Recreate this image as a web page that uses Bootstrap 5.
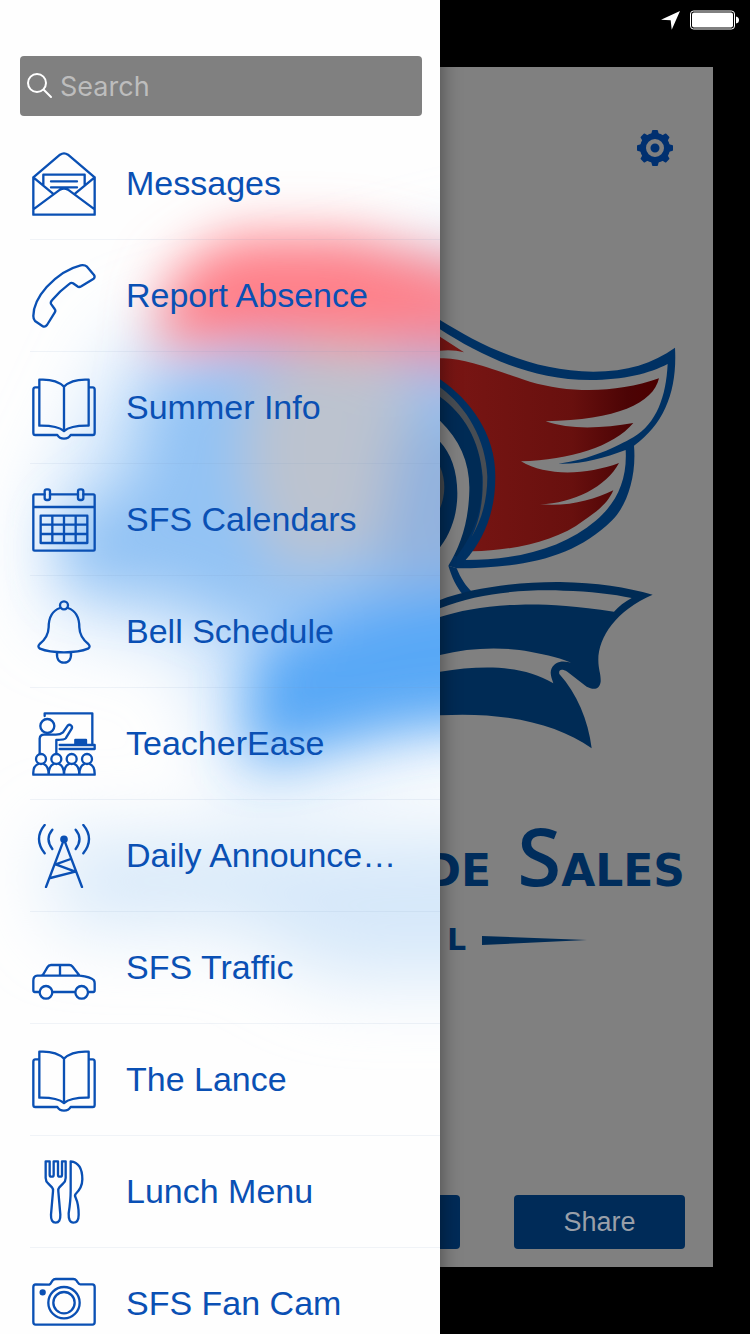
<!DOCTYPE html>
<html lang="en">
<head>
<meta charset="utf-8">
<meta name="viewport" content="width=device-width, initial-scale=1">
<title>School App</title>
<link href="https://cdn.jsdelivr.net/npm/bootstrap@5.3.0/dist/css/bootstrap.min.css" rel="stylesheet">
<style>
  :root { --ink: #0a50b4; --navy: #002b58; --dim: #808080; }
  body { background: #000; font-family: "Liberation Sans", Arial, sans-serif; }
  .drawer { flex: 0 0 auto; width: min(440px, 85vw); background: #fefefe; z-index: 2; box-shadow: 0 0 20px rgba(0, 0, 0, .45); }
  .drawer-glow { z-index: -1; }
  .search-bar { margin: 56px 18px 12px 20px; height: 60px; background: var(--dim); border-radius: 4px; padding: 0 7px; gap: 7px; }
  .search-bar input { background: transparent; color: #fff; font: 27px Inter, sans-serif; outline: 0; min-width: 0; }
  .search-bar input::placeholder { color: #bdbdbd; opacity: 1; }
  .menu-list { margin-left: 30px; min-height: 0; scrollbar-width: none; }
  .menu-row { height: 112px; flex: none; padding-left: 2px; gap: 30px; color: var(--ink); font-size: 34px; border-bottom: 1px solid rgba(120, 150, 190, .1); text-decoration: none; white-space: nowrap; }
  .menu-row svg { width: 64px; height: 64px; flex: none; fill: none; stroke: currentColor; stroke-width: 7; stroke-linejoin: round; stroke-linecap: round; }
  .menu-row .solid { fill: currentColor; }
  .stage { min-width: 0; }
  .status-bar { flex: none; height: 40px; padding-right: 11px; gap: 10px; }
  .home { background: var(--dim); margin: 27px 37px 67px 0; }
  .gear { margin: 63px 40px 134px 0; width: 36px; height: 36px; color: #003070; }
  .wordmark { color: #002d5c; font-family: "DejaVu Sans", sans-serif; font-weight: 700; white-space: nowrap; }
  .name-line { font-size: 44px; line-height: 80px; height: 80px; margin: 55px 28px 0 0; gap: 26px; }
  .name-line .tall { font: 600 80px/80px "Open Sans", sans-serif; }
  .school-line { font-size: 30px; line-height: 40px; gap: 16px; margin: 25px 126px 0 0; }
  .actions { gap: 54px; padding: 0 28px 18px 0; }
  .action { flex: none; width: 171px; height: 54px; background: var(--navy); color: #999fa8; font-size: 27px; border: 0; border-radius: 4px; }
</style>
<script src="https://cdn.jsdelivr.net/npm/bootstrap@5.3.0/dist/js/bootstrap.bundle.min.js"></script>
</head>
<body>
<div class="d-flex vh-100 overflow-hidden">

  <aside class="drawer position-relative d-flex flex-column vh-100">
    <svg class="drawer-glow position-absolute top-0 start-0 w-100 h-100" viewBox="0 0 440 1334" preserveAspectRatio="none" aria-hidden="true">
      <defs>
        <filter id="soft" filterUnits="userSpaceOnUse" x="-150" y="50" width="850" height="1100"><feGaussianBlur stdDeviation="27"/></filter>
        <filter id="mist" filterUnits="userSpaceOnUse" x="-150" y="50" width="850" height="1200"><feGaussianBlur stdDeviation="38"/></filter>
      </defs>
      <g filter="url(#mist)">
        <path fill="#d6e8f9" d="M50 840L540 830V980H330L230 925H60z"/>
        <path fill="#c5dffa" d="M130 340L520 240V720L240 790L220 740L200 650L50 610L50 510z"/>
      </g>
      <g filter="url(#soft)">
        <path fill="#ff7f88" d="M155 350L170 275L230 236H350L460 265L600 320V350H400L300 345L210 345z"/>
        <path fill="#d99bb4" d="M390 335L600 320V410H400z"/>
        <path fill="#93c3f4" d="M155 385L260 345L330 350L580 400V640L240 620L170 590L70 580L65 530L140 480z"/>
        <path fill="#bcc3cf" d="M250 385L330 340L390 360L440 450L380 550L280 570L245 480z"/>
        <path fill="#92b2de" d="M400 420H580V580H370z"/>
        <path fill="#58a8f6" d="M255 650L380 600L580 570V710L400 725L250 760z"/>
      </g>
    </svg>

    <div class="search-bar d-flex align-items-center flex-shrink-0">
      <svg class="flex-shrink-0" width="26" height="26" viewBox="0 0 26 26" fill="none" stroke="#fff" stroke-width="2" stroke-linecap="round" aria-hidden="true"><circle cx="10" cy="10" r="9"/><path d="M17 17l7 7"/></svg>
      <input class="border-0 p-0 flex-grow-1" type="search" placeholder="Search" aria-label="Search">
    </div>

    <nav class="menu-list d-flex flex-column flex-grow-1 overflow-auto" aria-label="Main menu">
      <a class="menu-row d-flex align-items-center" href="#messages">
        <svg viewBox="0 0 192 192"><path d="M4 76V188H188V76L108 8Q96 0 84 8zM4 76L62 124M188 76L130 124M4 172L84 113Q96 106 108 113L188 172M34 98V68H158V98M57 88H135M57 106H135"/></svg>
        <span>Messages</span></a>
      <a class="menu-row d-flex align-items-center" href="#absence">
        <svg viewBox="0 0 192 192"><path d="M146 4Q158 2 165 8L186 33Q190 39 185 44L148 67Q141 71 136 67L123 58Q118 55 113 59Q82 82 60 109Q54 115 58 121L68 135Q72 140 68 146L45 183Q39 191 31 186L9 171Q4 166 4 156Q4 114 44 69Q92 17 146 4z"/></svg>
        <span>Report Absence</span></a>
      <a class="menu-row d-flex align-items-center" href="#summer">
        <svg viewBox="0 0 192 192"><path d="M20 34H10Q4 34 4 41V170Q4 177 10 177H76Q82 188 96 188Q110 188 116 177H182Q188 177 188 170V41Q188 34 182 34H172M96 32Q72 8 22 11V149Q76 148 96 165Q116 148 170 149V11Q120 8 96 32V165"/></svg>
        <span>Summer Info</span></a>
      <a class="menu-row d-flex align-items-center" href="#calendars">
        <svg viewBox="0 0 192 192"><path d="M38 19H8Q4 19 4 24V184Q4 188 8 188H184Q188 188 188 184V24Q188 19 184 19H154M54 19H138M4 57H188M26 83H166V165H26zM26 110H166M26 138H166M61 83V165M96 83V165M131 83V165"/><rect x="38" y="4" width="16" height="32" rx="6"/><rect x="138" y="4" width="16" height="32" rx="6"/></svg>
        <span>SFS Calendars</span></a>
      <a class="menu-row d-flex align-items-center" href="#bell">
        <svg viewBox="0 0 192 192"><circle cx="96" cy="16" r="12"/><path d="M84 24Q50 36 50 82Q49 112 23 132Q15 140 24 146Q50 157 96 157Q142 157 168 146Q177 140 169 132Q143 112 142 82Q142 36 108 24M75 157Q73 188 96 188Q119 188 117 157"/></svg>
        <span>Bell Schedule</span></a>
      <a class="menu-row d-flex align-items-center" href="#teacherease">
        <svg viewBox="0 0 192 192"><path d="M38 12V4H181V99M83 99H188V111H83"/><path class="solid" d="M130 84H162V96H130z"/><circle cx="46" cy="42" r="21"/><path d="M23 124V80Q24 68 36 68H68Q84 69 93 61L107 41Q112 36 117 40Q122 44 119 50L101 79Q98 83 73 84V124"/><circle cx="27" cy="141" r="15"/><circle cx="73" cy="141" r="15"/><circle cx="119" cy="141" r="15"/><circle cx="165" cy="141" r="15"/><path d="M4 188Q2 162 19 156M35 156Q50 162 50 188Q50 162 65 156M81 156Q96 162 96 188Q96 162 111 156M127 156Q142 162 142 188Q142 162 157 156M173 156Q189 162 188 188M4 188H188"/></svg>
        <span>TeacherEase</span></a>
      <a class="menu-row d-flex align-items-center" href="#announcements">
        <svg viewBox="0 0 192 192"><circle class="solid" cx="96" cy="46" r="8"/><path d="M96 46L42 189M96 46L150 189M116 105L71 121L130 143L55 162M38 3Q4 44 38 88M154 3Q188 44 154 88M61 17Q38 44 61 75M131 17Q154 44 131 75"/></svg>
        <span>Daily Announce…</span></a>
      <a class="menu-row d-flex align-items-center" href="#traffic">
        <svg viewBox="0 0 192 192"><path d="M22 168H8Q4 168 4 162V134Q4 120 16 119H28Q34 117 38 108L46 94Q50 87 57 87H112Q118 87 122 92L143 119Q176 123 185 132Q188 136 188 142V162Q188 168 184 168H170M61 168H129M28 119H143M84 87V119"/><circle cx="42" cy="169" r="19"/><circle cx="149" cy="169" r="19"/></svg>
        <span>SFS Traffic</span></a>
      <a class="menu-row d-flex align-items-center" href="#lance">
        <svg viewBox="0 0 192 192"><path d="M20 34H10Q4 34 4 41V170Q4 177 10 177H76Q82 188 96 188Q110 188 116 177H182Q188 177 188 170V41Q188 34 182 34H172M96 32Q72 8 22 11V149Q76 148 96 165Q116 148 170 149V11Q120 8 96 32V165"/></svg>
        <span>The Lance</span></a>
      <a class="menu-row d-flex align-items-center" href="#lunch">
        <svg viewBox="0 0 192 192"><path d="M41 4V54Q41 64 49 71L60 82Q64 86 63 94L57 164Q56 188 71 188Q86 188 85 164L79 94Q78 86 82 82L93 71Q101 64 101 54V4H90V44Q90 50 84 50Q78 50 78 44V4H65V44Q65 50 59 50Q53 50 53 44V4zM116 4Q151 8 151 58Q151 83 131 102Q127 107 131 113Q140 132 140 164Q140 188 124 188Q109 188 110 160Q116 121 116 92z"/></svg>
        <span>Lunch Menu</span></a>
      <a class="menu-row d-flex align-items-center" href="#fancam">
        <svg viewBox="0 0 192 192"><path d="M52 38Q56 36 58 31L62 25Q65 21 71 21H124Q130 21 133 25L137 31Q140 37 145 37H181Q188 37 188 45V150Q188 158 181 158H11Q4 158 4 150V45Q4 37 11 37z"/><circle cx="96" cy="92" r="47"/><circle cx="96" cy="92" r="32"/><circle class="solid" cx="32" cy="61" r="6"/></svg>
        <span>SFS Fan Cam</span></a>
    </nav>
  </aside>

  <div class="stage d-flex flex-column flex-grow-1 vh-100">
    <div class="status-bar d-flex justify-content-end align-items-center">
      <svg width="19" height="19" viewBox="0 0 55 55" fill="#fff" role="img" aria-label="Location"><path d="M0 25L55 0L31 54L28 27z"/></svg>
      <svg width="49" height="20" viewBox="0 0 49 20" role="img" aria-label="Battery full"><rect x="0.5" y="1" width="44" height="18" rx="3" fill="none" stroke="#fff"/><rect x="2" y="2.500" width="41" height="15" rx="2" fill="#fff"/><path fill="#fff" d="M46 6.500Q49 7 49 10T46 13.500z"/></svg>
    </div>

    <main class="home d-flex flex-column flex-grow-1">
      <button class="gear btn p-0 border-0 align-self-end d-block flex-shrink-0" type="button" aria-label="Settings">
        <svg class="d-block" width="36" height="36" viewBox="-18 -18 36 36">
          <g fill="currentColor"><path id="tooth" d="M-4 -13L-3 -17Q-3 -18 -2 -18H2Q3 -18 3 -17L4 -13z"/><use href="#tooth" transform="rotate(45)"/><use href="#tooth" transform="rotate(90)"/><use href="#tooth" transform="rotate(135)"/><use href="#tooth" transform="rotate(180)"/><use href="#tooth" transform="rotate(225)"/><use href="#tooth" transform="rotate(270)"/><use href="#tooth" transform="rotate(315)"/><circle r="15"/></g>
          <circle r="6.750" fill="none" stroke="#808080" stroke-width="4.500"/>
        </svg>
      </button>

      <svg class="w-100 d-block" viewBox="30 0 819 1380" role="img" aria-label="Winged school crest with ribbon">
        <defs>
          <linearGradient id="wing" gradientUnits="userSpaceOnUse" x1="30" y1="0" x2="690" y2="0"><stop offset="0" stop-color="#7a1614"/><stop offset=".6" stop-color="#68100e"/><stop offset=".85" stop-color="#4c0405"/><stop offset="1" stop-color="#4c0000"/></linearGradient>
        </defs>
        <path fill="#003163" d="M30 60C140 128 300 215 490 215C590 215 670 190 735 143C742 270 705 370 612 437C620 530 590 620 545 662C430 775 280 803 80 805L30 740z"/>
        <path fill="#808080" d="M30 88C150 165 300 240 480 240C580 240 660 220 713 192C708 290 680 370 610 412C560 440 480 480 385 491C450 494 520 475 587 450C592 540 560 610 497 662C400 745 260 780 105 780L30 755z"/>
        <path fill="url(#wing)" d="M30 175C100 175 150 195 300 245C420 280 560 280 687 235C670 310 560 360 347 364C420 390 520 385 610 369C550 440 420 480 273 484C350 530 470 525 567 489C530 560 430 610 330 613C420 620 490 600 550 571C530 615 500 634 460 662C380 725 240 752 128 754L30 700zM30 110L102 157Q70 148 30 152z"/>
        <path fill="#003163" d="M30 238C120 300 196 400 196 530C196 640 160 720 105 782L80 805L55 797L30 740z"/>
        <path fill="#002b55" d="M30 285C110 350 156 430 156 550C156 640 130 700 80 770L30 745z"/>
        <path fill="#484d53" d="M30 262C110 320 168 420 172 530C172 600 155 660 125 710C150 660 160 600 158 530C150 420 100 340 30 290z"/>
        <path fill="#808080" d="M30 362C90 420 120 490 118 570C116 670 90 740 55 797L100 880L30 900V742C70 690 82 630 82 580C82 510 62 460 30 425z"/>
        <path fill="#43484d" d="M30 500Q56 560 30 625z"/>
        <path fill="#003163" d="M55 797L80 805C92 835 105 855 128 878L100 885C78 860 65 830 55 797z"/>
        <path fill="#002b55" d="M30 900C120 865 260 845 390 846C500 848 590 862 668 884C560 930 505 1010 505 1080C505 1110 513 1120 512 1145C508 1170 490 1170 470 1160L412 1115C395 1105 385 1108 388 1122C440 1180 475 1260 485 1345C380 1270 220 1235 30 1246z"/>
        <path fill="#808080" d="M30 925C150 875 300 868 400 872C480 874 550 882 605 894C585 905 565 920 552 935C420 915 330 912 270 914C170 916 90 932 30 951zM30 1065C120 1042 220 1040 300 1055C350 1065 400 1075 430 1092C400 1078 375 1085 365 1105C358 1120 365 1135 370 1150C280 1095 160 1095 30 1115z"/>
      </svg>

      <div class="wordmark name-line d-flex justify-content-end align-items-baseline"><span>DE</span><span><span class="tall">S</span>ALES</span></div>
      <div class="wordmark school-line d-flex justify-content-end align-items-center"><span class="d-flex gap-2"><span>O</span><span>L</span></span><svg class="flex-shrink-0" width="105" height="9" viewBox="0 0 105 9" fill="#002b55" aria-hidden="true"><path d="M0 0L105 4L0 9z"/></svg></div>

      <div class="actions d-flex justify-content-end mt-auto">
        <button class="action" type="button" aria-label="More"></button>
        <button class="action" type="button">Share</button>
      </div>
    </main>
  </div>
</div>
</body>
</html>
